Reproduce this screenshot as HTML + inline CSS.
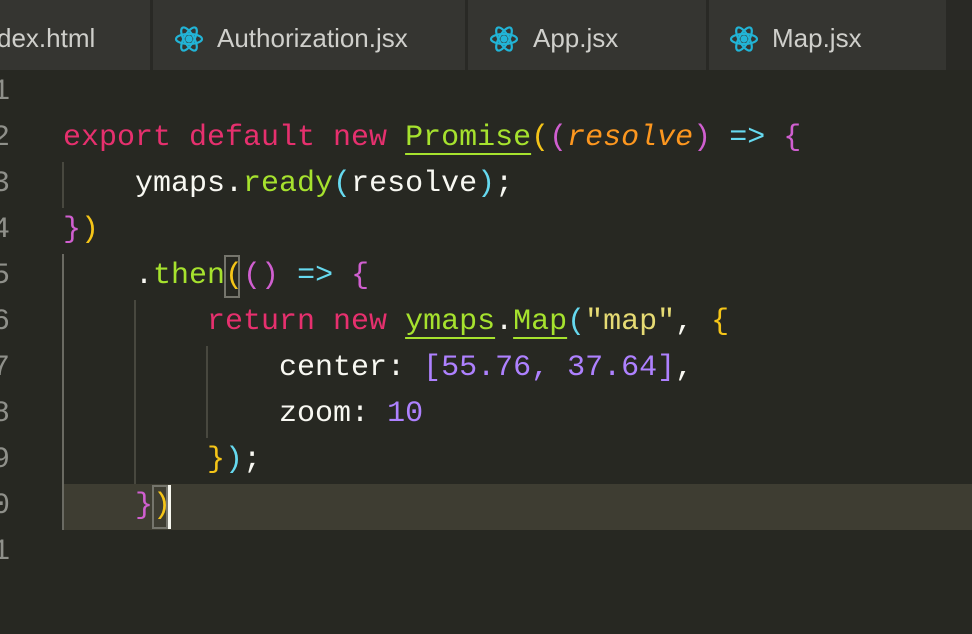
<!DOCTYPE html>
<html><head><style>
body{margin:0;width:972px;height:634px;background:#272822;overflow:hidden;position:relative;font-family:"Liberation Mono",monospace}
.tabs{position:absolute;left:0;top:0;width:972px;height:70px;background:#292925}
.tab{position:absolute;top:0;height:70px;background:#353531;color:#cfcfcb;font:26px "Liberation Sans",sans-serif;line-height:76px}
.tab svg{position:absolute;top:24px}
.ln{position:absolute;left:-8px;color:#8f908a;font-size:30px;line-height:46px}
.code{position:absolute;left:63px;font-size:30px;line-height:46px;white-space:pre;color:#f8f8f2}
.k{color:#e6306e}.g{color:#a6e22e}.u{text-decoration:underline;text-underline-offset:8px;text-decoration-thickness:2px}
.o{color:#fd971f;font-style:italic}.c{color:#66d9ef}.p{color:#d05fd0}.y{color:#f5c518}.n{color:#ae81ff}.s{color:#e6db74}
.guide{position:absolute;width:2px;background:#48483f}
</style></head><body>
<div class="tabs">
<div class="tab" style="left:0;width:150px"><span style="position:absolute;left:-3px">dex.html</span></div>
<div class="tab" style="left:153px;width:312px"><svg style="left:21px" width="30" height="30" viewBox="-15 -15 30 30" fill="none" stroke="#22b4d6" stroke-width="2.2"><ellipse rx="13" ry="5"/><ellipse rx="13" ry="5" transform="rotate(60)"/><ellipse rx="13" ry="5" transform="rotate(120)"/><circle r="2.5" fill="#22b4d6"/></svg><span style="position:absolute;left:64px">Authorization.jsx</span></div>
<div class="tab" style="left:468px;width:238px"><svg style="left:21px" width="30" height="30" viewBox="-15 -15 30 30" fill="none" stroke="#22b4d6" stroke-width="2.2"><ellipse rx="13" ry="5"/><ellipse rx="13" ry="5" transform="rotate(60)"/><ellipse rx="13" ry="5" transform="rotate(120)"/><circle r="2.5" fill="#22b4d6"/></svg><span style="position:absolute;left:65px">App.jsx</span></div>
<div class="tab" style="left:709px;width:237px"><svg style="left:20px" width="30" height="30" viewBox="-15 -15 30 30" fill="none" stroke="#22b4d6" stroke-width="2.2"><ellipse rx="13" ry="5"/><ellipse rx="13" ry="5" transform="rotate(60)"/><ellipse rx="13" ry="5" transform="rotate(120)"/><circle r="2.5" fill="#22b4d6"/></svg><span style="position:absolute;left:63px">Map.jsx</span></div>
</div>
<div style="position:absolute;left:63px;top:484px;width:909px;height:46px;background:#3e3d32"></div>
<div class="guide" style="left:62px;top:254px;height:276px;background:#6a6a62"></div>
<div class="guide" style="left:62px;top:162px;height:46px"></div>
<div class="guide" style="left:134px;top:300px;height:184px"></div>
<div class="guide" style="left:206px;top:346px;height:92px"></div>
<div style="position:absolute;left:224px;top:255px;width:16px;height:43px;border:2px solid #75756c;box-sizing:border-box"></div>
<div style="position:absolute;left:152px;top:485px;width:16px;height:44px;border:2px solid #75756c;box-sizing:border-box"></div>
<div style="position:absolute;left:168px;top:485px;width:3px;height:44px;background:#f8f8f0"></div>
<div class="ln" style="top:69px">1<br>2<br>3<br>4<br>5<br>6<br>7<br>8<br>9<br>0<br>1</div>
<div class="code" style="top:69px">
<span class="k">export default new</span> <span class="g u">Promise</span><span class="y">(</span><span class="p">(</span><span class="o">resolve</span><span class="p">)</span> <span class="c">=&gt;</span> <span class="p">{</span>
    ymaps.<span class="g">ready</span><span class="c">(</span>resolve<span class="c">)</span>;
<span class="p">}</span><span class="y">)</span>
    .<span class="g">then</span><span class="y">(</span><span class="p">()</span> <span class="c">=&gt;</span> <span class="p">{</span>
        <span class="k">return new</span> <span class="g u">ymaps</span>.<span class="g u">Map</span><span class="c">(</span><span class="s">"map"</span>, <span class="y">{</span>
            center: <span class="n">[55.76, 37.64]</span>,
            zoom: <span class="n">10</span>
        <span class="y">}</span><span class="c">)</span>;
    <span class="p">}</span><span class="y">)</span>
</div>
</body></html>
